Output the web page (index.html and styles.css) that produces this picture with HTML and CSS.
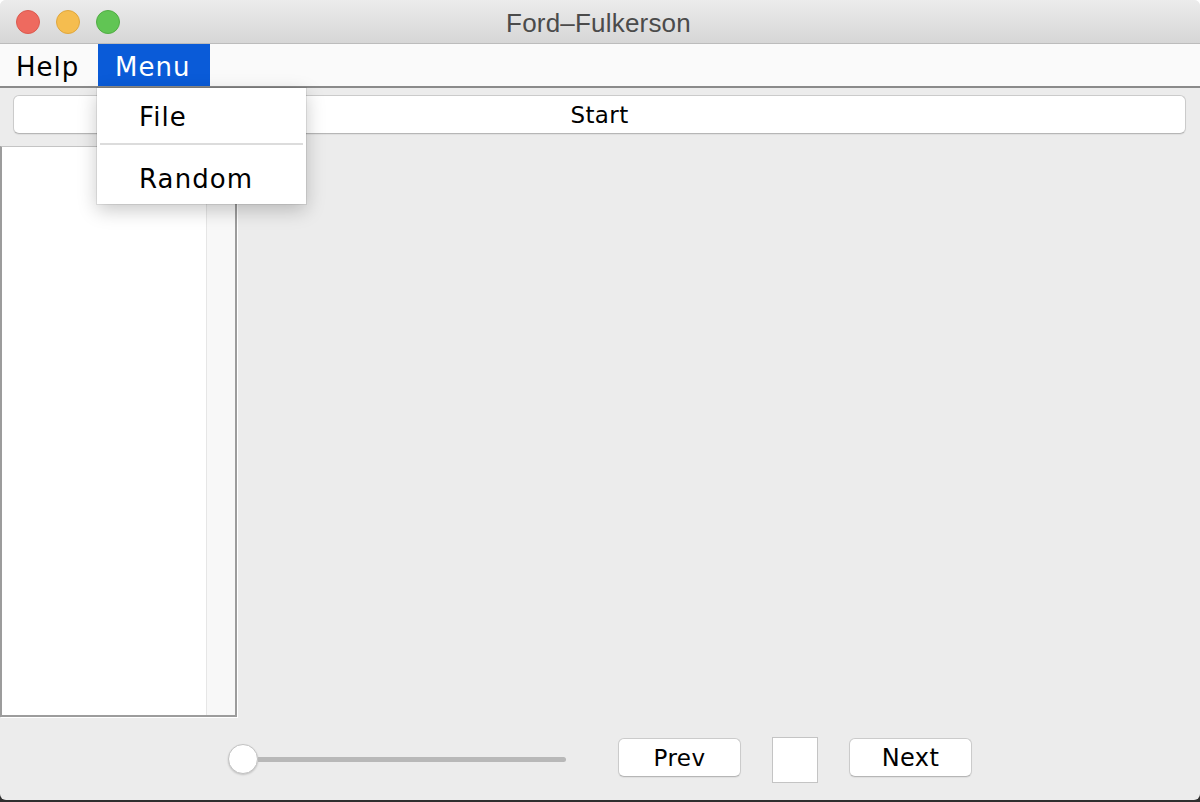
FILE: index.html
```html
<!DOCTYPE html>
<html lang="en">
<head>
<meta charset="utf-8">
<title>Ford–Fulkerson</title>
<link rel="stylesheet" href="styles.css">
</head>
<body>
<div class="window">
  <header class="titlebar">
    <div class="lights">
      <span class="light red"></span>
      <span class="light yellow"></span>
      <span class="light green"></span>
    </div>
    <div class="title">Ford–Fulkerson</div>
    <div></div>
  </header>
  <nav class="menubar">
    <span class="menu help">Help</span>
    <span class="menu active">Menu</span>
    <div class="dropdown">
      <div class="item item-file">File</div>
      <div class="sep"></div>
      <div class="item item-random">Random</div>
    </div>
  </nav>
  <main class="content">
    <div class="toolbar"><button class="btn start">Start</button></div>
    <div class="workarea">
      <div class="list">
        <div class="list-body"></div>
        <div class="vscroll"></div>
      </div>
      <div class="canvas"></div>
    </div>
    <div class="controls">
      <div class="slider"><span class="thumb"></span><span class="track"></span></div>
      <button class="btn nav prev">Prev</button>
      <div class="step-box"></div>
      <button class="btn nav next">Next</button>
    </div>
  </main>
</div>
</body>
</html>
```
FILE: styles.css
```css
html, body {
  margin: 0;
  padding: 0;
}
body {
  width: 1200px;
  height: 802px;
  background: linear-gradient(#ffffff 0 50%, #2f2f2f 50%);
  font-family: "DejaVu Sans", "Liberation Sans", sans-serif;
  overflow: hidden;
}
.window {
  width: 1200px;
  height: 800px;
  border-radius: 6px;
  overflow: hidden;
  background: #ececec;
  display: flex;
  flex-direction: column;
}
.titlebar {
  height: 43px;
  flex: none;
  border-bottom: 1px solid #bcbcbc;
  background: linear-gradient(#ececec, #d6d6d6);
  display: grid;
  grid-template-columns: 1fr auto 1fr;
  align-items: center;
}
.lights {
  display: flex;
  gap: 16px;
  padding-left: 16px;
  padding-top: 1px;
}
.light {
  width: 24px;
  height: 24px;
  border-radius: 50%;
  box-sizing: border-box;
}
.red { background: #ee6a5f; border: 1px solid #dc5a4f; }
.yellow { background: #f5bd4f; border: 1px solid #e0a73d; }
.green { background: #61c554; border: 1px solid #51ad44; }
.title {
  font-family: "Liberation Sans", Arial, sans-serif;
  font-size: 26px;
  color: #4b4b4b;
  padding-top: 4px;
  padding-right: 3px;
  letter-spacing: 0.2px;
}
.menubar {
  position: relative;
  height: 42px;
  flex: none;
  border-bottom: 2px solid #8a8a8a;
  background: #fafafa;
  display: flex;
  align-items: stretch;
  font-size: 26px;
  color: #000;
}
.menu {
  display: flex;
  align-items: center;
  box-sizing: border-box;
  padding-left: 16px;
  padding-top: 3px;
  letter-spacing: 1px;
}
.help { width: 98px; }
.menu.active {
  width: 112px;
  padding-left: 17px;
  background: #0a5bd8;
  color: #fff;
}
.dropdown {
  position: absolute;
  left: 97px;
  top: 44px;
  width: 209px;
  background: #fff;
  box-shadow: 0 0 0 1px rgba(0,0,0,0.08), 0 6px 18px rgba(0,0,0,0.22);
  z-index: 10;
  padding-bottom: 1px;
}
.item {
  padding-left: 42px;
  font-size: 26px;
  letter-spacing: 1.1px;
  color: #000;
}
.item-file {
  height: 54px;
  line-height: 58px;
}
.sep {
  height: 2px;
  margin: 1px 3px 0;
  background: #dcdcdc;
}
.item-random {
  margin-top: 6px;
  height: 52px;
  line-height: 56px;
}
.content {
  flex: 1;
  display: flex;
  flex-direction: column;
  min-height: 0;
}
.toolbar {
  flex: none;
  padding: 7px 14px 0 13px;
}
.btn {
  font-family: "DejaVu Sans", "Liberation Sans", sans-serif;
  font-size: 23px;
  letter-spacing: 0.4px;
  color: #000;
  background: #fff;
  border: 1px solid #cbcbcb;
  border-bottom-color: #b6b6b6;
  border-radius: 6px;
  box-shadow: 0 1px 1px rgba(0,0,0,0.06);
  padding: 0;
  margin: 0;
  box-sizing: border-box;
}
.start {
  display: block;
  width: 100%;
  height: 39px;
}
.workarea {
  flex: 1;
  margin-top: 12px;
  display: flex;
  min-height: 0;
}
.list {
  width: 237px;
  box-sizing: border-box;
  border: 2px solid #9c9c9c;
  border-top: 1px solid #c4c4c4;
  box-shadow: 1px 1px 0 #ffffff;
  display: flex;
  background: #fff;
}
.list-body {
  flex: 1;
  background: #fff;
}
.vscroll {
  width: 28px;
  background: #f8f8f8;
  border-left: 1px solid #e6e6e6;
}
.canvas {
  flex: 1;
}
.controls {
  flex: none;
  height: 83px;
  box-sizing: border-box;
  padding-top: 20px;
  display: flex;
  justify-content: center;
  align-items: flex-start;
  gap: 31px;
}
.slider {
  width: 338px;
  height: 30px;
  margin-top: 7px;
  margin-right: 21px;
  display: flex;
  align-items: center;
}
.thumb {
  width: 30px;
  height: 30px;
  box-sizing: border-box;
  border-radius: 50%;
  background: #fff;
  border: 1px solid #c2c2c2;
  box-shadow: 0 1px 2px rgba(0,0,0,0.18);
  flex: none;
}
.track {
  flex: 1;
  height: 5px;
  margin-top: 1px;
  background: #b8b8b8;
  border-radius: 0 3px 3px 0;
}
.nav {
  width: 123px;
  height: 39px;
  margin-top: 1px;
}
.next {
  font-size: 24px;
}
.step-box {
  width: 46px;
  height: 46px;
  box-sizing: border-box;
  background: #fff;
  border: 1px solid #c4c4c4;
}
```
